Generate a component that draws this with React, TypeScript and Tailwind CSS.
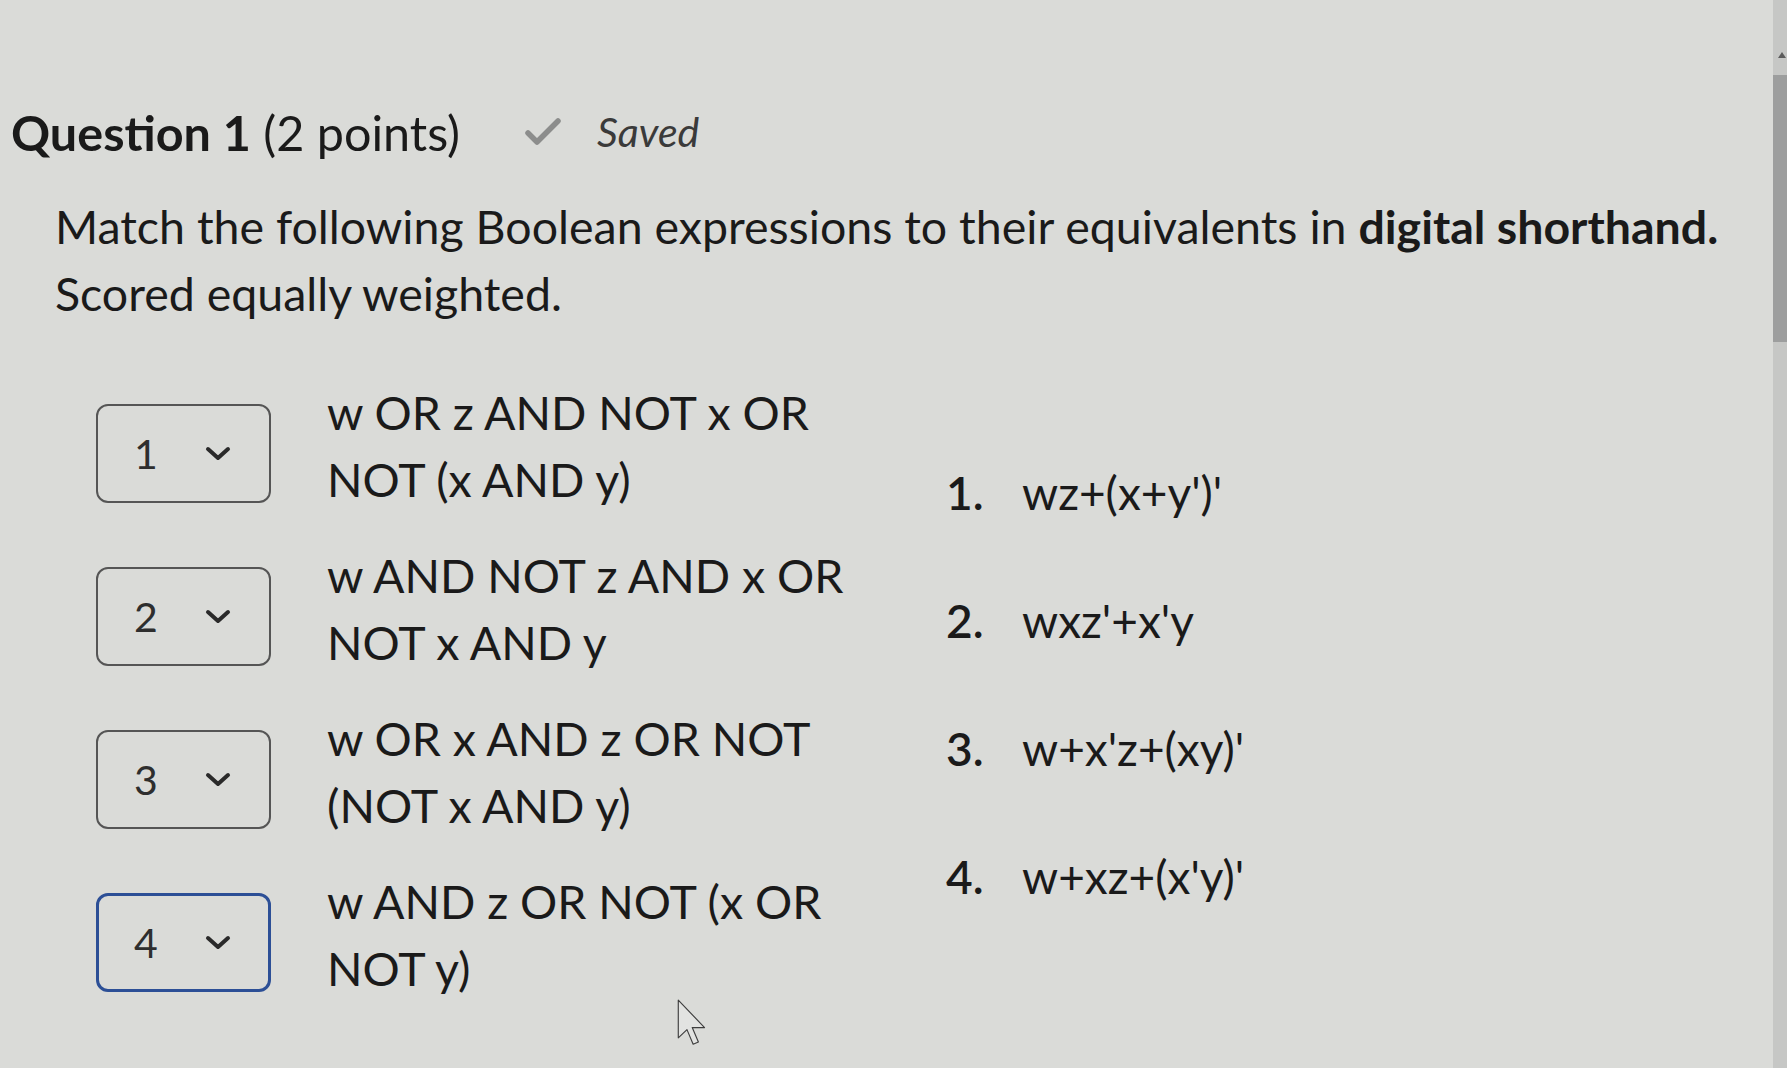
import React from "react";

function Chevron() {
  return (
    <svg width="28" height="18" viewBox="0 0 28 18" fill="none">
      <polyline points="4,4 14,13 24,4" stroke="#2a2a2a" strokeWidth="4" strokeLinecap="round" strokeLinejoin="round" />
    </svg>
  );
}

function Select({ value, focused }: { value: string; focused?: boolean }) {
  return (
    <div
      className={
        focused
          ? "mt-[25px] flex h-[99px] w-[175px] shrink-0 items-center rounded-[12px] border-[3px] border-[#2c4f96] pl-[35px]"
          : "mt-[25px] flex h-[99px] w-[175px] shrink-0 items-center rounded-[12px] border-2 border-[#555555] pl-[36px]"
      }
    >
      <span className="w-[70px] text-[41px] leading-none text-[#2e2e2e]">{value}</span>
      <Chevron />
    </div>
  );
}

const rows: { n: string; lines: string[]; focused?: boolean }[] = [
  { n: "1", lines: ["w OR z AND NOT x OR", "NOT (x AND y)"] },
  { n: "2", lines: ["w AND NOT z AND x OR", "NOT x AND y"] },
  { n: "3", lines: ["w OR x AND z OR NOT", "(NOT x AND y)"] },
  { n: "4", lines: ["w AND z OR NOT (x OR", "NOT y)"], focused: true },
];

const answers = ["wz+(x+y')'", "wxz'+x'y", "w+x'z+(xy)'", "w+xz+(x'y)'"];

export default function App() {
  return (
    <div className="flex h-[1068px] w-[1787px] overflow-hidden bg-[#dadbd8] font-['Lato','Liberation_Sans',sans-serif] text-[#1a1a1a]">
      <main className="relative flex-1 pt-[102px]">
        <div className="flex items-center pl-[11px]">
          <h1 className="whitespace-nowrap text-[48.5px] leading-[60px]">
            <span className="font-bold">Question 1</span> (2 points)
          </h1>
          <svg className="ml-[64px]" width="38" height="30" viewBox="0 0 38 30" fill="none">
            <polyline points="4,16 13,25 34,4" stroke="#8c8d8c" strokeWidth="5.5" strokeLinecap="round" strokeLinejoin="round" />
          </svg>
          <span className="ml-[35px] text-[41px] italic leading-[60px] text-[#3a3a3a]">Saved</span>
        </div>

        <p className="mt-[31px] pl-[55px] text-[46.5px] leading-[67px]">
          <span className="whitespace-nowrap">
            Match the following Boolean expressions to their equivalents in{" "}
            <span className="font-bold">digital shorthand.</span>
          </span>
          <br />
          Scored equally weighted.
        </p>

        <div className="mt-[52px] flex items-center pl-[96px]">
          <div className="flex flex-col gap-[29px]">
            {rows.map((r) => (
              <div key={r.n} className="flex items-start gap-[56px]">
                <Select value={r.n} focused={r.focused} />
                <div className="w-[560px] text-[46.5px] leading-[67px]">
                  {r.lines.map((l) => (
                    <div key={l} className="whitespace-nowrap">
                      {l}
                    </div>
                  ))}
                </div>
              </div>
            ))}
          </div>

          <ol className="mb-[12px] ml-[59px] flex flex-col gap-[61px] text-[46px] leading-[67px]">
            {answers.map((a, i) => (
              <li key={a} className="flex">
                <span className="w-[76px] font-semibold">{i + 1}.</span>
                <span>{a}</span>
              </li>
            ))}
          </ol>
        </div>

        <svg className="absolute left-[676px] top-[999px]" width="32" height="48" viewBox="0 0 13 21" fill="none">
          <path d="M0.5 0.5 L0.5 17 L4.3 13.4 L7 19.8 L9.3 18.8 L6.6 12.5 L12 12.5 Z" fill="#e2e3e1" stroke="#3e3e3e" strokeWidth="0.5" strokeLinejoin="round" />
        </svg>
      </main>

      <aside className="flex w-[14px] shrink-0 flex-col bg-[#c6c7c5]">
        <div className="mt-[52px] flex justify-end pr-[1px]">
          <svg width="8" height="6" viewBox="0 0 8 6">
            <polygon points="4,0 8,6 0,6" fill="#5c5c5c" />
          </svg>
        </div>
        <div className="mt-[17px] h-[267px] w-full bg-[#9d9e9e]" />
      </aside>
    </div>
  );
}
